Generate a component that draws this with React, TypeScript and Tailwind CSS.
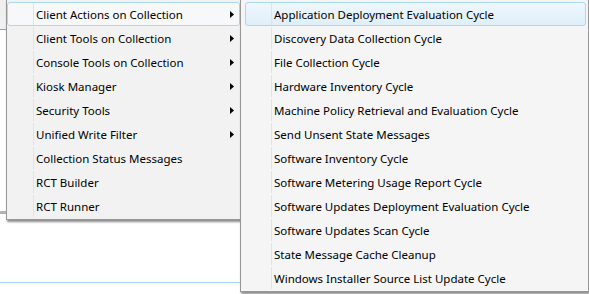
import React from "react";

const actions = [
  "Client Actions on Collection",
  "Client Tools on Collection",
  "Console Tools on Collection",
  "Kiosk Manager",
  "Security Tools",
  "Unified Write Filter",
  "Collection Status Messages",
  "RCT Builder",
  "RCT Runner",
];
const withSub = 6; // first six have submenus

const cycles = [
  "Application Deployment Evaluation Cycle",
  "Discovery Data Collection Cycle",
  "File Collection Cycle",
  "Hardware Inventory Cycle",
  "Machine Policy Retrieval and Evaluation Cycle",
  "Send Unsent State Messages",
  "Software Inventory Cycle",
  "Software Metering Usage Report Cycle",
  "Software Updates Deployment Evaluation Cycle",
  "Software Updates Scan Cycle",
  "State Message Cache Cleanup",
  "Windows Installer Source List Update Cycle",
];

const Arrow = () => (
  <svg width="4" height="7" viewBox="0 0 4 7" className="mr-[5px] shrink-0">
    <polygon points="0,0 4,3.5 0,7" fill="#000" />
  </svg>
);

type ItemProps = {
  label: string;
  sub?: boolean;
  active?: "open" | "hover";
  className?: string;
};

const Item = ({ label, sub, active, className }: ItemProps) => {
  const box =
    active === "hover"
      ? "border-[#a9d9f0] bg-gradient-to-b from-[#eef7fc] to-[#dfeff9] rounded-[3px]"
      : active === "open"
      ? "border-[#a9d9f0] bg-[#f6f8f9] rounded-[3px]"
      : "border-transparent";
  return (
    <div className={`h-6 flex items-stretch border ${box} ${className || ""}`}>
      <div className="w-[26px] shrink-0 border-r border-[#e2e3e3]" />
      <div className="flex-1 flex items-center pl-[2px] pt-px text-[11.5px] text-black whitespace-nowrap">
        {label}
      </div>
      {sub && (
        <div className="flex items-center">
          <Arrow />
        </div>
      )}
    </div>
  );
};

export default function App() {
  return (
    <div
      className="w-[589px] h-[294px] overflow-hidden bg-white flex"
      style={{ fontFamily: '"Noto Sans", "Open Sans", sans-serif' }}
    >
      <div className="w-[241px] shrink-0 flex flex-col">
        <div className="flex -mt-px">
          <div className="w-[6px] shrink-0 flex flex-col">
            <div className="h-[31px] bg-[#f0f0f0] border-b border-[#a0a0a0]" />
            <div className="mt-[181px] h-[3px] bg-[#b4b4b4]" />
          </div>
          <div className="w-[235px] shrink-0 bg-[#f2f2f2] border border-[#979797] pt-[2px] pb-[1px] shadow-[1px_2px_2px_rgba(0,0,0,0.45)]">
            {actions.map((a, i) => (
              <Item
                key={a}
                label={a}
                sub={i < withSub}
                active={i === 0 ? "open" : undefined}
              />
            ))}
          </div>
        </div>
        <div className="flex-1" />
        <div className="h-px bg-[#a6d3ef] mr-px mb-[11px]" />
      </div>
      <div className="relative z-10 -ml-px -mt-px w-[349px] h-[293px] shrink-0 bg-[#f5f5f5] border border-[#979797] pt-[2px] shadow-[1px_2px_2px_rgba(0,0,0,0.45)]">
        {cycles.map((c, i) => (
          <Item
            key={c}
            label={c}
            active={i === 0 ? "hover" : undefined}
            className="ml-[4px] mr-[2px]"
          />
        ))}
      </div>
    </div>
  );
}
